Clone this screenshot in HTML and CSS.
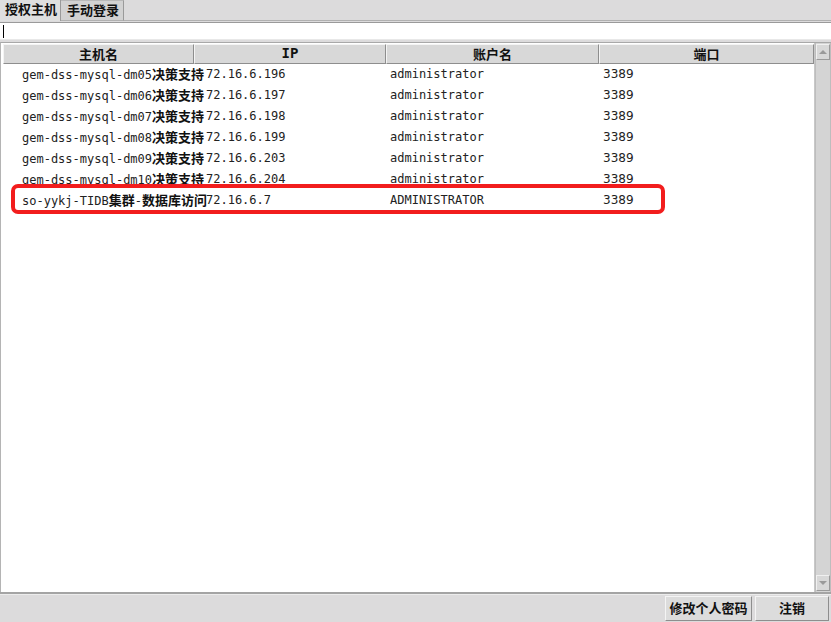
FILE: index.html
```html
<!DOCTYPE html>
<html lang="zh">
<head>
<meta charset="utf-8">
<title>授权主机</title>
<link rel="stylesheet" href="styles.css">
</head>
<body>
<div class="app">
  <div class="tabs">
    <div class="tab tab-active">授权主机</div>
    <div class="tab tab-idle">手动登录</div>
    <div class="tab-fill"></div>
  </div>
  <div class="search"><span class="caret"></span></div>
  <div class="table-area">
    <div class="table">
      <div class="thead">
        <div class="th c1">主机名</div>
        <div class="th c2 mono-b">IP</div>
        <div class="th c3">账户名</div>
        <div class="th c4">端口</div>
      </div>
      <div class="tbody">
        <div class="tr"><div class="td c1"><span class="mono">gem-dss-mysql-dm05</span><b class="cjk">决策支持</b></div><div class="td c2 mono">72.16.6.196</div><div class="td c3 mono">administrator</div><div class="td c4 num">3389</div></div>
        <div class="tr"><div class="td c1"><span class="mono">gem-dss-mysql-dm06</span><b class="cjk">决策支持</b></div><div class="td c2 mono">72.16.6.197</div><div class="td c3 mono">administrator</div><div class="td c4 num">3389</div></div>
        <div class="tr"><div class="td c1"><span class="mono">gem-dss-mysql-dm07</span><b class="cjk">决策支持</b></div><div class="td c2 mono">72.16.6.198</div><div class="td c3 mono">administrator</div><div class="td c4 num">3389</div></div>
        <div class="tr"><div class="td c1"><span class="mono">gem-dss-mysql-dm08</span><b class="cjk">决策支持</b></div><div class="td c2 mono">72.16.6.199</div><div class="td c3 mono">administrator</div><div class="td c4 num">3389</div></div>
        <div class="tr"><div class="td c1"><span class="mono">gem-dss-mysql-dm09</span><b class="cjk">决策支持</b></div><div class="td c2 mono">72.16.6.203</div><div class="td c3 mono">administrator</div><div class="td c4 num">3389</div></div>
        <div class="tr"><div class="td c1"><span class="mono">gem-dss-mysql-dm10</span><b class="cjk">决策支持</b></div><div class="td c2 mono">72.16.6.204</div><div class="td c3 mono">administrator</div><div class="td c4 num">3389</div></div>
        <div class="tr"><div class="td c1"><span class="mono">so-yykj-TIDB</span><b class="cjk">集群</b><span class="mono">-</span><b class="cjk">数据库访问</b></div><div class="td c2 mono">72.16.6.7</div><div class="td c3 mono">ADMINISTRATOR</div><div class="td c4 num">3389</div></div>
      </div>
      <div class="highlight"></div>
    </div>
    <div class="scrollbar">
      <div class="sb-btn"><span class="arrow-up"></span></div>
      <div class="sb-track"></div>
      <div class="sb-btn"><span class="arrow-down"></span></div>
    </div>
  </div>
  <div class="footer">
    <div class="btn btn-wide">修改个人密码</div>
    <div class="btn btn-narrow">注销</div>
  </div>
</div>
</body>
</html>
```
FILE: styles.css
```css
* { box-sizing: border-box; }
html, body { margin: 0; padding: 0; }
body {
  background: #dcdbdc;
  font-family: "DejaVu Sans", "Noto Sans CJK SC", sans-serif;
  color: #111;
  width: 831px;
  height: 622px;
  overflow: hidden;
}
.app { display: flex; flex-direction: column; height: 622px; }

.tabs { display: flex; height: 21px; }
.tab {
  font-family: "Noto Sans CJK SC", sans-serif;
  font-weight: 700;
  font-size: 13px;
  line-height: 18px;
  height: 21px;
  white-space: nowrap;
}
.tab-active {
  width: 61px;
  background: #dfdfdf;
  border-right: 1px solid #9a9a9a;
  padding-left: 5px;
}
.tab-idle {
  width: 63px;
  background: #d2d2d2;
  border-top: 1px solid #b8b8b8;
  border-right: 1px solid #9a9a9a;
  border-bottom: 1px solid #b0b0b0;
  padding-left: 6px;
  line-height: 17px;
}
.tab-fill { flex: 1; border-bottom: 1px solid #b0b0b0; }

.search {
  margin-top: 1px;
  height: 18px;
  background: #fff;
  border-top: 1px solid #9a9a9a;
  border-bottom: 1px solid #e8e8e8;
}
.caret {
  display: block;
  width: 1px;
  height: 13px;
  background: #000;
  margin: 2px 0 0 3px;
}

.table-area {
  margin-top: 2px;
  height: 550px;
  display: flex;
  border-top: 1px solid #a8a8a8;
  border-left: 1px solid #b4b4b4;
}
.table {
  flex: 1;
  background: #fff;
  position: relative;
  padding: 1px 0 0 2px;
  border-right: 1px solid #c8c8c8;
}
.thead { display: flex; height: 20px; }
.th {
  background: #d8d8d8;
  border-top: 1px solid #f4f4f4;
  border-left: 1px solid #f4f4f4;
  border-right: 1px solid #8e8e8e;
  border-bottom: 1px solid #8e8e8e;
  text-align: center;
  font-family: "Noto Sans CJK SC", sans-serif;
  font-weight: 700;
  font-size: 13px;
  line-height: 17px;
}
.th.mono-b { font-family: "DejaVu Sans Mono", monospace; font-size: 14px; }
.c1 { width: 191px; }
.c2 { width: 192px; }
.c3 { width: 213px; }
.c4 { width: 215px; }

.tbody { display: flex; flex-direction: column; }
.tr { display: flex; height: 21px; align-items: center; overflow: hidden; }
.td { white-space: nowrap; height: 21px; line-height: 20px; }
.td.c1 { padding-left: 19px; overflow: visible; }
.td.c2 { padding-left: 12px; }
.td.c3 { padding-left: 4px; }
.td.c4 { padding-left: 4px; }
.mono { font-family: "DejaVu Sans Mono", monospace; font-size: 12px; color: #222; }
.cjk {
  font-family: "Noto Sans CJK SC", sans-serif;
  font-weight: 700;
  font-size: 13px;
  line-height: 20px;
  color: #111;
}
.num { font-family: "DejaVu Sans", sans-serif; font-size: 12px; color: #222; }

.highlight {
  position: absolute;
  left: 10px;
  top: 141px;
  width: 654px;
  height: 30px;
  border: 4px solid #f21d1d;
  border-radius: 7px;
}

.scrollbar {
  width: 16px;
  display: flex;
  flex-direction: column;
  background: #d4d4d4;
  border-left: 1px solid #bdbdbd;
  border-right: 1px solid #bdbdbd;
  padding: 1px 0;
}
.sb-btn {
  height: 16px;
  background: #d8d8d8;
  border: 1px solid #f0f0f0;
  border-right-color: #9a9a9a;
  border-bottom-color: #9a9a9a;
  display: flex;
  align-items: center;
  justify-content: center;
}
.sb-track { flex: 1; }
.arrow-up {
  width: 0; height: 0;
  border-left: 4px solid transparent;
  border-right: 4px solid transparent;
  border-bottom: 4px solid #9a9a9a;
}
.arrow-down {
  width: 0; height: 0;
  border-left: 4px solid transparent;
  border-right: 4px solid transparent;
  border-top: 4px solid #9a9a9a;
}

.footer {
  flex: 1;
  display: flex;
  justify-content: flex-end;
  align-items: flex-end;
  gap: 3px;
  padding: 0 2px 1px 0;
  border-top: 2px solid #a4a4a4;
  box-shadow: inset 0 1px 0 #ececec;
}
.btn {
  height: 25px;
  background: #dcdcdc;
  border-top: 1px solid #f4f4f4;
  border-left: 1px solid #f4f4f4;
  border-right: 1px solid #8e8e8e;
  border-bottom: 1px solid #8e8e8e;
  font-family: "Noto Sans CJK SC", sans-serif;
  font-weight: 700;
  font-size: 13px;
  line-height: 22px;
  text-align: center;
}
.btn-wide { width: 87px; margin-right: 0; }
.btn-narrow { width: 74px; }
```
